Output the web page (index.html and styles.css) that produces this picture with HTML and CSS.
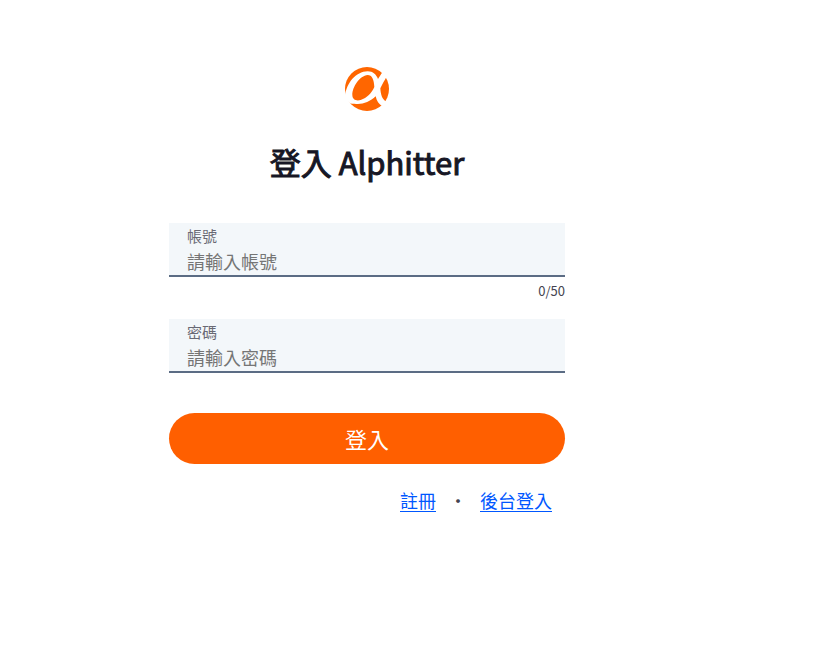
FILE: index.html
```html
<!DOCTYPE html>
<html lang="zh-Hant">
<head>
<meta charset="utf-8">
<meta name="viewport" content="width=device-width, initial-scale=1">
<title>登入 Alphitter</title>
<link rel="stylesheet" href="styles.css">
</head>
<body>
<main class="login">
  <svg class="logo" viewBox="0 0 132 132" role="img" aria-label="Alphitter">
    <circle cx="66" cy="66" r="66" fill="#ff6600"/>
    <path fill="#fff" fill-rule="evenodd" d="M0 86 C5 48 32 14 68 13 C84 13 94 23 99 36 L112 16 L126 26 C119 40 111 52 106 64 C107 84 112 98 124 104 L113 118 C101 112 95 102 92 88 C74 106 48 114 28 110 C14 112 4 100 0 86 Z M68 24 C44 26 22 60 22 84 C22 98 34 103 47 99 C66 93 80 78 88 60 C87 38 81 24 68 24 Z"/>
  </svg>
  <h1 class="title">登入 Alphitter</h1>
  <form class="form">
    <div class="field">
      <label class="label" for="account">帳號</label>
      <input class="input" id="account" type="text" maxlength="50" placeholder="請輸入帳號">
    </div>
    <p class="count">0/50</p>
    <div class="field">
      <label class="label" for="password">密碼</label>
      <input class="input" id="password" type="password" placeholder="請輸入密碼">
    </div>
    <button class="submit" type="submit">登入</button>
  </form>
  <nav class="links">
    <a class="link" href="#register">註冊</a>
    <span>・</span>
    <a class="link" href="#admin">後台登入</a>
  </nav>
</main>
</body>
</html>
```
FILE: styles.css
```css
* {
  box-sizing: border-box;
}

body {
  margin: 0;
  background: #fff;
  color: #44444f;
  font-family: "Noto Sans CJK TC", sans-serif;
}

.login {
  display: flex;
  flex-direction: column;
  align-items: center;
  max-width: 565px;
  padding: 67px 0 24px 169px;
}

.logo {
  width: 44px;
  height: 44px;
}

.title {
  margin: 28px 0 39px;
  color: #171725;
  font-size: 31px;
  font-weight: 400;
  line-height: 45px;
  -webkit-text-stroke: 1px currentColor;
}

.form {
  width: 100%;
}

.field {
  padding: 0 18px 2px;
  background: #f3f7fa;
  border-bottom: 2px solid #5b6c84;
}

.label {
  display: block;
  color: #696974;
  font-size: 15px;
  line-height: 26px;
}

.input {
  display: block;
  width: 100%;
  height: 24px;
  padding: 0;
  border: 0;
  outline: 0;
  background: transparent;
  color: #171725;
  font: inherit;
  font-size: 18px;
  line-height: 24px;
}

.input::placeholder {
  color: #757575;
}

.count {
  margin: 4px 0 18px;
  font-size: 13px;
  line-height: 20px;
  text-align: right;
}

.submit {
  width: 100%;
  height: 51px;
  margin: 40px 0 24px;
  padding: 0 0 2px;
  border: 0;
  border-radius: 50px;
  background: #ff5f00;
  color: #fff;
  font: inherit;
  font-size: 22px;
}

.links {
  display: flex;
  align-self: flex-end;
  gap: 13px;
  margin-right: 13px;
  font-size: 18px;
  line-height: 24px;
}

.link {
  color: #0057ff;
  text-decoration-thickness: 1px;
  text-underline-offset: 3px;
}
```
